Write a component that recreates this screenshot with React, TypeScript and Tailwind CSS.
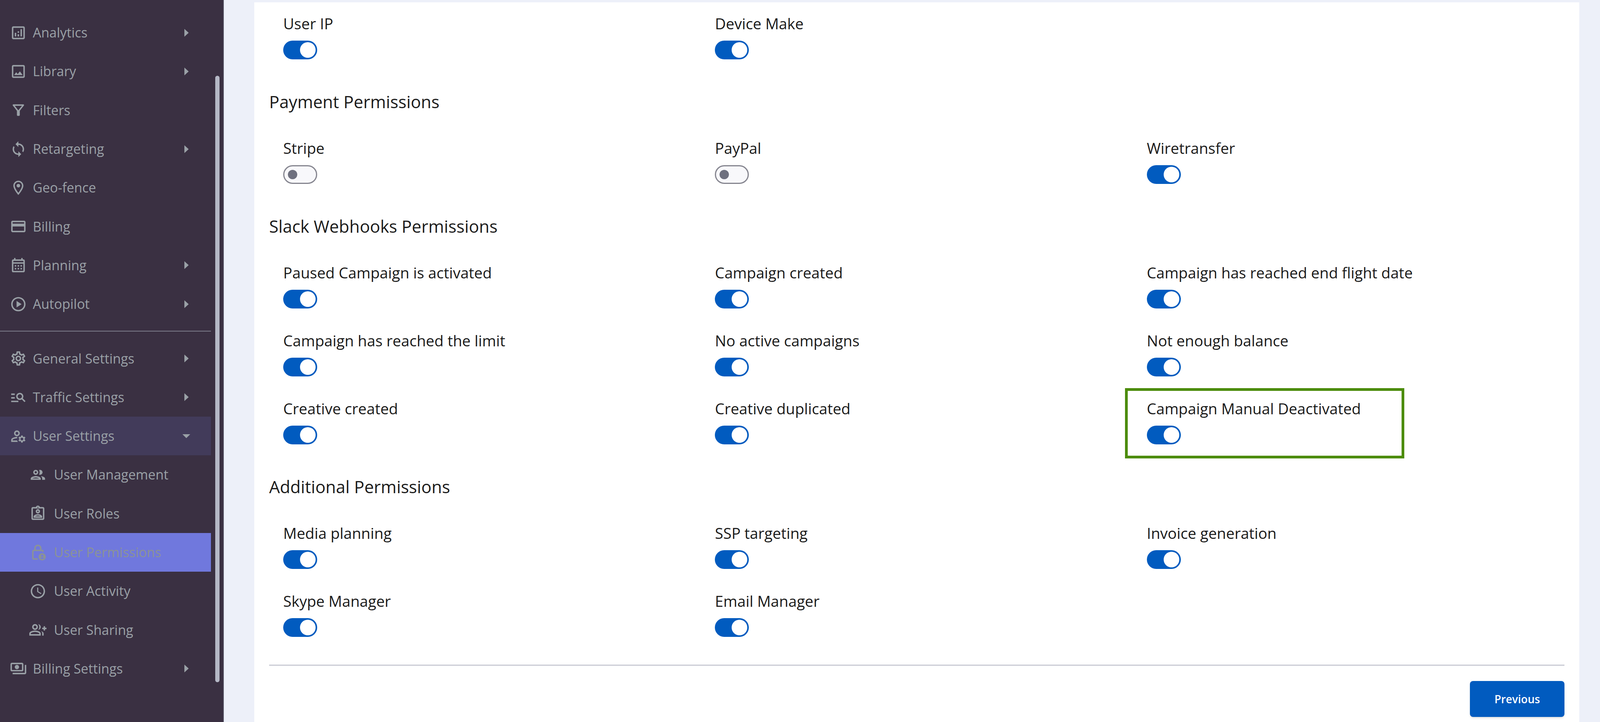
import React from "react";
import {
  MdOutlineAnalytics,
  MdOutlineImage,
  MdOutlineFilterAlt,
  MdOutlineSync,
  MdOutlineLocationOn,
  MdOutlineCreditCard,
  MdOutlineCalendarMonth,
  MdOutlinePlayCircle,
  MdOutlineSettings,
  MdOutlineManageSearch,
  MdOutlineManageAccounts,
  MdOutlinePeople,
  MdOutlineAssignmentInd,
  MdOutlineLockPerson,
  MdOutlineAccessTime,
  MdOutlineGroupAdd,
  MdOutlinePayments,
} from "react-icons/md";

type NavItem = { label: string; icon: React.ElementType; arrow?: boolean };

const topNav: NavItem[] = [
  { label: "Analytics", icon: MdOutlineAnalytics, arrow: true },
  { label: "Library", icon: MdOutlineImage, arrow: true },
  { label: "Filters", icon: MdOutlineFilterAlt },
  { label: "Retargeting", icon: MdOutlineSync, arrow: true },
  { label: "Geo-fence", icon: MdOutlineLocationOn },
  { label: "Billing", icon: MdOutlineCreditCard },
  { label: "Planning", icon: MdOutlineCalendarMonth, arrow: true },
  { label: "Autopilot", icon: MdOutlinePlayCircle, arrow: true },
];

const userNav: NavItem[] = [
  { label: "User Management", icon: MdOutlinePeople },
  { label: "User Roles", icon: MdOutlineAssignmentInd },
  { label: "User Permissions", icon: MdOutlineLockPerson },
  { label: "User Activity", icon: MdOutlineAccessTime },
  { label: "User Sharing", icon: MdOutlineGroupAdd },
];

function NavRow({ item }: { item: NavItem }) {
  const Icon = item.icon;
  return (
    <div className="h-[99.3px] flex items-center relative">
      <div className="w-[84px] pl-[25px] flex-shrink-0">
        <Icon className="w-[44px] h-[44px]" />
      </div>
      <span>{item.label}</span>
      {item.arrow && (
        <span className="absolute left-[472px] top-1/2 -translate-y-1/2 border-y-[10px] border-y-transparent border-l-[11px] border-l-[#9aa1a7]" />
      )}
    </div>
  );
}

function SubRow({ item, active }: { item: NavItem; active?: boolean }) {
  const Icon = item.icon;
  return (
    <div className={"h-[99.3px] flex items-center " + (active ? "bg-[#7078dd] text-[#8b9396]" : "")}>
      <div className="w-[138px] pl-[75px] flex-shrink-0">
        <Icon className="w-[44px] h-[44px]" />
      </div>
      <span>{item.label}</span>
    </div>
  );
}

function Toggle({ on = true }: { on?: boolean }) {
  if (!on) {
    return (
      <div className="w-[87px] h-[48px] rounded-full border-[3px] border-[#85858f] bg-[#f8f8fb] flex items-center pl-[9px]">
        <div className="w-[24px] h-[24px] rounded-full bg-[#6f717f]" />
      </div>
    );
  }
  return (
    <div className="w-[87px] h-[48px] rounded-full bg-[#015bbf] flex items-center justify-end pr-[4px]">
      <div className="w-[40px] h-[40px] rounded-full bg-white" />
    </div>
  );
}

function Cell({ label, on }: { label: string; on?: boolean }) {
  return (
    <div className="pl-[36px] h-[114px]">
      <div className="h-[44px] leading-[44px] mb-[22px] whitespace-nowrap">{label}</div>
      <Toggle on={on} />
    </div>
  );
}

function Heading({ children, mt }: { children: string; mt: string }) {
  return <h2 className={"text-[43.5px] h-[48px] leading-[48px] font-normal text-[#1a1a1a] mb-[72px] " + mt}>{children}</h2>;
}

export default function App() {
  return (
    <div className="w-[4097px] h-[1849px] flex overflow-hidden bg-[#edf0f9] font-['Open_Sans',sans-serif]">
      {/* sidebar */}
      <aside className="relative w-[573px] flex-shrink-0 bg-[#3a3042] border-r-2 border-[#565364] text-[#9aa1a7] text-[34px] pt-[34px]">
        <div className="w-[540px]">
          {topNav.map((n) => (
            <NavRow key={n.label} item={n} />
          ))}
          <div className="h-[2px] bg-[#7c7d8b] mt-[19px] mb-[19px]" />
          <NavRow item={{ label: "General Settings", icon: MdOutlineSettings, arrow: true }} />
          <NavRow item={{ label: "Traffic Settings", icon: MdOutlineManageSearch, arrow: true }} />
          <div className="h-[99.3px] flex items-center relative bg-[#423b5a]">
            <div className="w-[84px] pl-[25px] flex-shrink-0">
              <MdOutlineManageAccounts className="w-[44px] h-[44px]" />
            </div>
            <span>User Settings</span>
            <span className="absolute left-[467px] top-1/2 -translate-y-1/2 border-x-[10px] border-x-transparent border-t-[10px] border-t-[#9aa1a7]" />
          </div>
          {userNav.map((n) => (
            <SubRow key={n.label} item={n} active={n.label === "User Permissions"} />
          ))}
          <NavRow item={{ label: "Billing Settings", icon: MdOutlinePayments, arrow: true }} />
        </div>
        {/* scrollbar */}
        <div className="absolute left-[551px] top-[194px] w-[11px] h-[1553px] rounded-full bg-[#b5b8c6]" />
      </aside>

      {/* main */}
      <main className="flex-1 ml-[78px] mr-[54px] mt-[6px] bg-white px-[38px] pt-[32px] text-[38.6px] text-[#1a1a1a] h-[1843px]">
        <div className="grid grid-cols-3">
          <Cell label="User IP" />
          <Cell label="Device Make" />
        </div>

        <Heading mt="mt-[85px]">Payment Permissions</Heading>
        <div className="grid grid-cols-3">
          <Cell label="Stripe" on={false} />
          <Cell label="PayPal" on={false} />
          <Cell label="Wiretransfer" />
        </div>

        <Heading mt="mt-[85px]">Slack Webhooks Permissions</Heading>
        <div className="grid grid-cols-3 gap-y-[60px]">
          <Cell label="Paused Campaign is activated" />
          <Cell label="Campaign created" />
          <Cell label="Campaign has reached end flight date" />
          <Cell label="Campaign has reached the limit" />
          <Cell label="No active campaigns" />
          <Cell label="Not enough balance" />
          <Cell label="Creative created" />
          <Cell label="Creative duplicated" />
          <div className="relative">
            <Cell label="Campaign Manual Deactivated" />
            <div className="absolute left-[-20px] top-[-30px] w-[715px] h-[180px] border-[7px] border-[#4c8c0a]" />
          </div>
        </div>

        <Heading mt="mt-[85px]">Additional Permissions</Heading>
        <div className="grid grid-cols-3 gap-y-[60px]">
          <Cell label="Media planning" />
          <Cell label="SSP targeting" />
          <Cell label="Invoice generation" />
          <Cell label="Skype Manager" />
          <Cell label="Email Manager" />
        </div>

        <div className="h-[3px] bg-[#c9cbd4] mt-[71px] mb-[39px]" />
        <div className="flex justify-end">
          <button className="w-[242px] h-[92px] rounded-[8px] bg-[#015bbf] text-white text-[28px] font-semibold shadow-md">
            Previous
          </button>
        </div>
      </main>
    </div>
  );
}
